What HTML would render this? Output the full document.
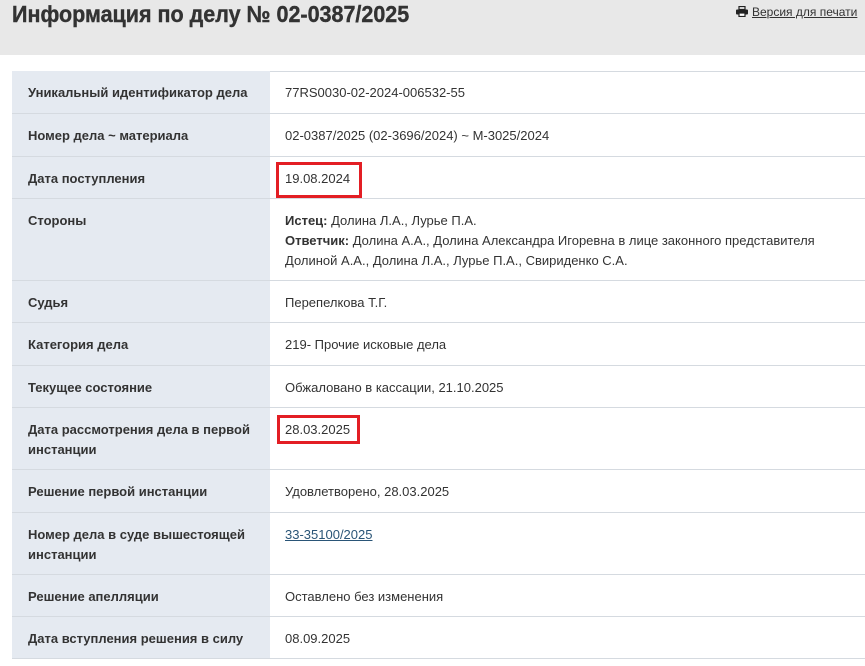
<!DOCTYPE html>
<html><head><meta charset="utf-8"><style>
html,body{margin:0;padding:0;width:865px;height:666px;overflow:hidden;background:#fff;font-family:"Liberation Sans","DejaVu Sans",sans-serif;color:#333}
.hdr{position:absolute;left:0;top:0;width:865px;height:55px;background:#e8e8e8}
.title{position:absolute;left:12px;top:0px;font-weight:bold;font-size:23px;line-height:28px;color:#333;transform:scaleX(0.935);transform-origin:0 0;white-space:nowrap;-webkit-text-stroke:0.4px #333}
.print{position:absolute;left:736px;top:5px;font-size:12px;color:#333;text-decoration:underline}
.row{position:absolute;left:12px;width:853px;border-bottom:1px solid #d5dae0;box-sizing:border-box}
.l{position:absolute;left:0;top:0;bottom:0;width:258px;background:#e5eaf1;padding:12px 0 0 16px;box-sizing:border-box;font-size:13px;font-weight:bold;line-height:20px;color:#333}
.v{position:absolute;left:258px;top:0;right:0;padding:12px 0 0 15px;box-sizing:border-box;font-size:13px;line-height:20px;color:#333}
.box{position:absolute;border:3px solid #e31e24;box-sizing:border-box}
a{color:#2a5577;text-decoration:underline}
</style></head><body>
<div class="hdr"></div>
<div class="title">Информация по делу № 02-0387/2025</div>
<div class="print"><svg width="12" height="11" viewBox="0 0 12 11" style="vertical-align:-1px;margin-right:4px"><rect x="3" y="0.5" width="6" height="3" fill="none" stroke="#222" stroke-width="1.2"/><rect x="0" y="3.5" width="12" height="5" rx="1" fill="#222"/><rect x="3" y="7" width="6" height="3.5" fill="#fff" stroke="#222" stroke-width="1.2"/></svg>Версия для печати</div>
<div style="position:absolute;left:12px;top:71px;width:853px;border-top:1px solid #d5dae0;border-left:1px solid #d5dae0;height:588px;box-sizing:border-box"></div>

<div class="row" style="top:71px;height:43px"><div class="l">Уникальный идентификатор дела</div><div class="v">77RS0030-02-2024-006532-55</div></div>
<div class="row" style="top:114px;height:43px"><div class="l">Номер дела ~ материала</div><div class="v">02-0387/2025 (02-3696/2024) ~ М-3025/2024</div></div>
<div class="row" style="top:157px;height:42px"><div class="l">Дата поступления</div><div class="v">19.08.2024</div></div>
<div class="row" style="top:199px;height:82px"><div class="l">Стороны</div><div class="v"><b>Истец:</b> Долина Л.А., Лурье П.А.<br><b>Ответчик:</b> Долина А.А., Долина Александра Игоревна в лице законного представителя Долиной А.А., Долина Л.А., Лурье П.А., Свириденко С.А.</div></div>
<div class="row" style="top:281px;height:42px"><div class="l">Судья</div><div class="v">Перепелкова Т.Г.</div></div>
<div class="row" style="top:323px;height:43px"><div class="l">Категория дела</div><div class="v">219- Прочие исковые дела</div></div>
<div class="row" style="top:366px;height:42px"><div class="l">Текущее состояние</div><div class="v">Обжаловано в кассации, 21.10.2025</div></div>
<div class="row" style="top:408px;height:62px"><div class="l">Дата рассмотрения дела в первой инстанции</div><div class="v">28.03.2025</div></div>
<div class="row" style="top:470px;height:43px"><div class="l">Решение первой инстанции</div><div class="v">Удовлетворено, 28.03.2025</div></div>
<div class="row" style="top:513px;height:62px"><div class="l">Номер дела в суде вышестоящей инстанции</div><div class="v"><a>33-35100/2025</a></div></div>
<div class="row" style="top:575px;height:42px"><div class="l">Решение апелляции</div><div class="v">Оставлено без изменения</div></div>
<div class="row" style="top:617px;height:42px"><div class="l">Дата вступления решения в силу</div><div class="v">08.09.2025</div></div>

<div class="box" style="left:276px;top:162px;width:86px;height:36px"></div>
<div class="box" style="left:277px;top:415px;width:83px;height:29px"></div>
</body></html>
